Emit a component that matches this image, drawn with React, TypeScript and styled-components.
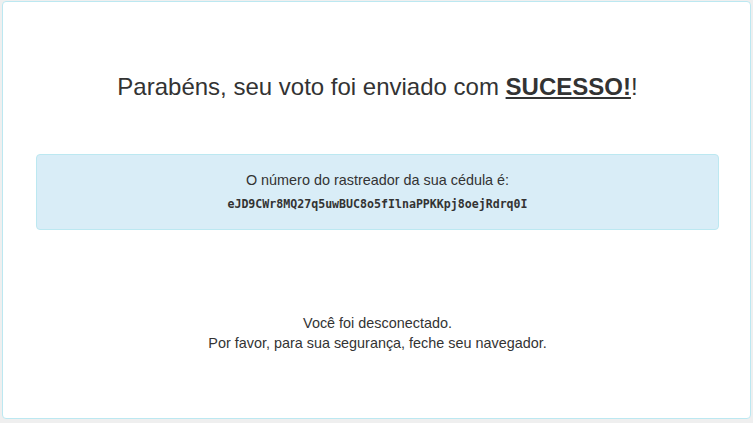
import React from "react";
import styled, { createGlobalStyle } from "styled-components";

const GlobalStyle = createGlobalStyle`
	html, body {
		margin: 0;
		padding: 0;
		background: #efefef;
		font-family: "Liberation Sans", Arial, sans-serif;
		color: #333;
	}
`;

const Page = styled.div`
	padding: 1px 2px 0 2px;
`;

const Panel = styled.div`
	box-sizing: border-box;
	height: 418px;
	background: #fff;
	border: 1px solid #bce8f1;
	border-radius: 4px;
	padding: 72px 31px 0 33px;
	display: flex;
	flex-direction: column;
`;

const Title = styled.h1`
	margin: 0;
	font-size: 24px;
	font-weight: normal;
	line-height: 26px;
	text-align: center;
	color: #333;
`;

const Strong = styled.strong`
	text-decoration: underline;
`;

const Alert = styled.div`
	margin-top: 54px;
	background: #d9edf7;
	border: 1px solid #bce8f1;
	border-radius: 4px;
	padding: 15px;
	text-align: center;
`;

const Line = styled.p`
	margin: 0;
	font-size: 14.4px;
	line-height: 20px;
	color: #333;
`;

const Tracker = styled.code`
	display: block;
	margin-top: 4px;
	font-family: "DejaVu Sans Mono", "Liberation Mono", monospace;
	font-weight: bold;
	font-size: 11.6px;
	line-height: 20px;
	color: #333;
`;

const Farewell = styled.div`
	margin-top: 83px;
	text-align: center;
`;

export default function App() {
	return (
		<>
			<GlobalStyle />
			<Page>
				<Panel>
					<Title>
						Parabéns, seu voto foi enviado com <Strong>SUCESSO!</Strong>!
					</Title>
					<Alert>
						<Line>O número do rastreador da sua cédula é:</Line>
						<Tracker>eJD9CWr8MQ27q5uwBUC8o5fIlnaPPKKpj8oejRdrq0I</Tracker>
					</Alert>
					<Farewell>
						<Line>Você foi desconectado.</Line>
						<Line>Por favor, para sua segurança, feche seu navegador.</Line>
					</Farewell>
				</Panel>
			</Page>
		</>
	);
}
